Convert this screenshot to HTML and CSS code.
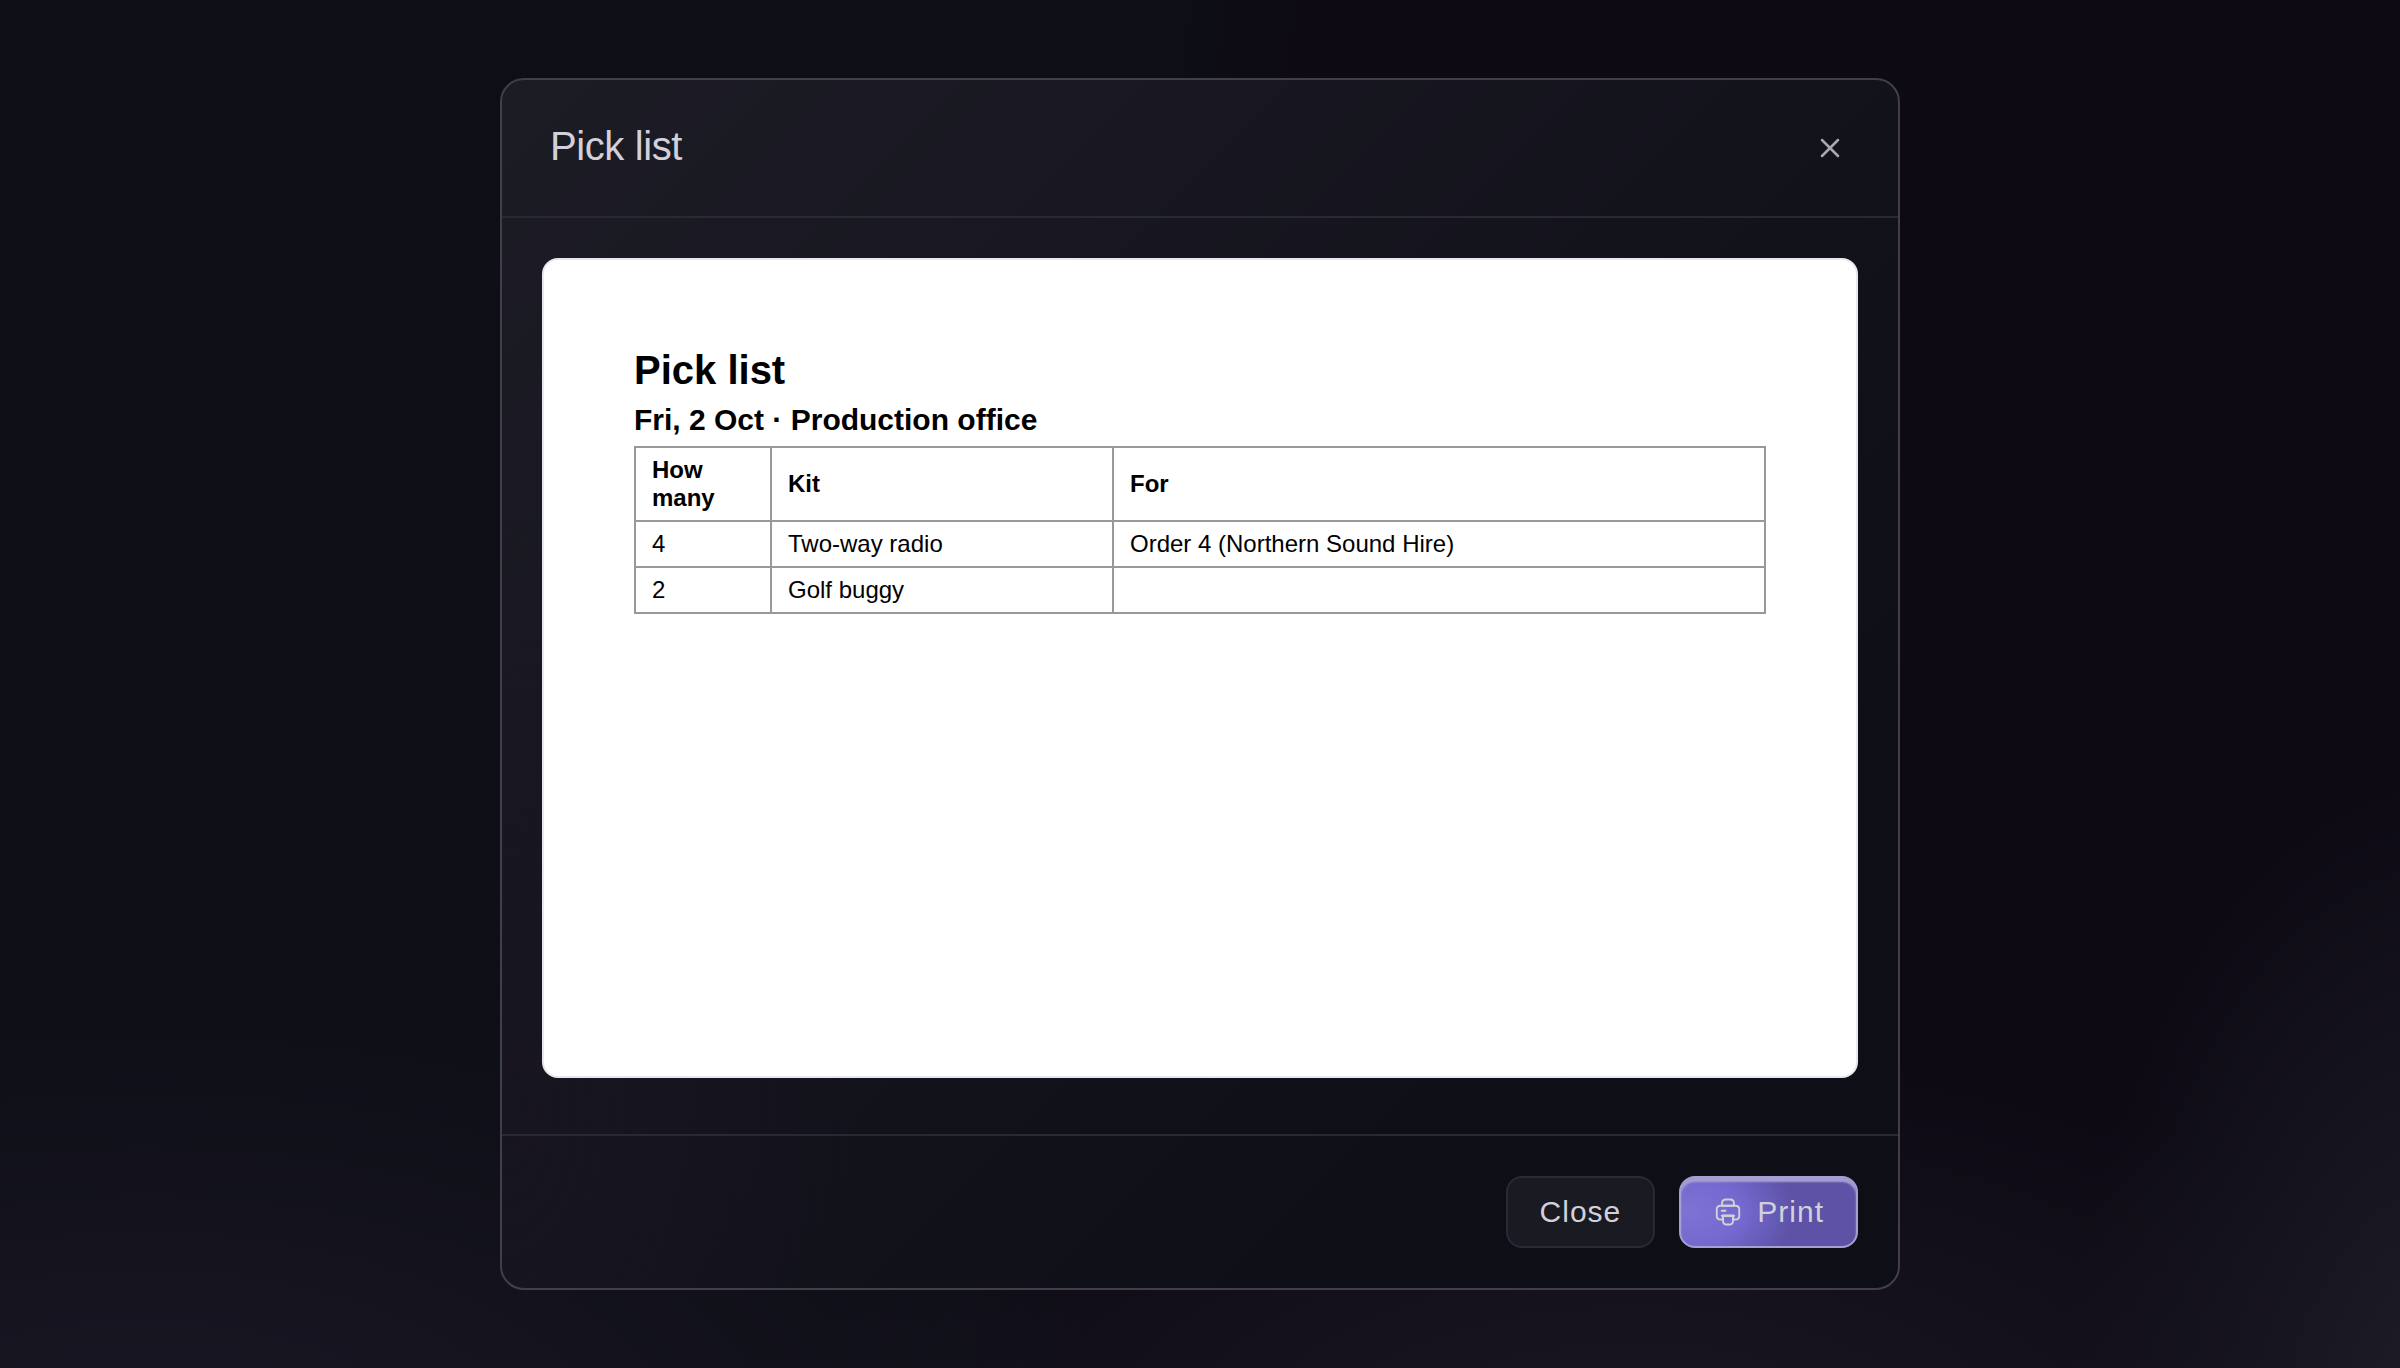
FILE: index.html
```html
<!DOCTYPE html>
<html lang="en">
<head>
  <meta charset="UTF-8" />
  <meta name="viewport" content="width=device-width, initial-scale=1.0" />
  <title>Pick list</title>
  <link rel="stylesheet" href="styles.css">
</head>
<body>
  <div class="backdrop">
    <section class="modal" role="dialog" aria-modal="true" aria-labelledby="modal-title">
      <header class="modal-header">
        <h2 class="modal-title" id="modal-title">Pick list</h2>
        <button type="button" class="icon-button" aria-label="Close dialog">
          <svg width="24" height="24" viewBox="0 0 24 24" fill="none" stroke="currentColor" stroke-width="2.5" stroke-linecap="round">
            <path d="M4 4l16 16M20 4L4 20" />
          </svg>
        </button>
      </header>

      <div class="modal-body">
        <article class="sheet">
          <h1 class="sheet-title">Pick list</h1>
          <h2 class="sheet-subtitle">Fri, 2 Oct · Production office</h2>
          <table class="sheet-table">
            <thead>
              <tr>
                <th class="col-count" scope="col">How many</th>
                <th class="col-kit" scope="col">Kit</th>
                <th scope="col">For</th>
              </tr>
            </thead>
            <tbody>
              <tr>
                <td>4</td>
                <td>Two-way radio</td>
                <td>Order 4 (Northern Sound Hire)</td>
              </tr>
              <tr>
                <td>2</td>
                <td>Golf buggy</td>
                <td></td>
              </tr>
            </tbody>
          </table>
        </article>
      </div>

      <footer class="modal-footer">
        <button type="button" class="button">Close</button>
        <button type="button" class="button button-primary">
          <svg width="30" height="30" viewBox="0 0 24 24" fill="none" stroke="currentColor" stroke-width="1.5" stroke-linecap="round" stroke-linejoin="round" aria-hidden="true">
            <path d="M7.25 7h9.5V5c0-2-.75-3-3-3h-3.5c-2.250 0-3 1-3 3v2z" />
            <path d="M16 15v4c0 2-1 3-3 3h-2c-2 0-3-1-3-3v-4h8z" />
            <path d="M21 10v5c0 2-1 3-3 3h-2v-3H8v3H6c-2 0-3-1-3-3v-5c0-2 1-3 3-3h12c2 0 3 1 3 3z" />
            <path d="M17 15H7M7 11h3" />
          </svg>
          Print
        </button>
      </footer>
    </section>
  </div>
</body>
</html>
```
FILE: styles.css
```css
* {
  box-sizing: border-box;
}

body {
  margin: 0;
  font-family: "Liberation Sans", Arial, sans-serif;
  color: #d2d1da;
  background: #0d0c15;
}

h1, h2 {
  margin: 0;
}

.backdrop {
  display: flex;
  align-items: center;
  justify-content: center;
  min-height: 100vh;
  padding: 40px;
  background:
    radial-gradient(ellipse 40% 36% at 6% 108%, #1b1825, transparent),
    radial-gradient(ellipse 36% 32% at 68% 108%, #1b1825, transparent),
    radial-gradient(ellipse 16% 50% at 102% 106%, #1f1e29, transparent),
    linear-gradient(100deg, #0d0e16, #0d0e16 45%, #0d0a14 50%);
}

.modal {
  width: 100%;
  max-width: 1400px;
  border: 2px solid #403f4a;
  border-radius: 24px;
  background:
    radial-gradient(ellipse 25% 50% at 0% 85%, #181521, transparent),
    linear-gradient(135deg, #1c1c25 0%, #191822 25%, #13131c 50%, #0e0e17 80%);
}

.modal-header {
  display: flex;
  align-items: flex-start;
  justify-content: space-between;
  padding: 40px 40px 40px 48px;
  border-bottom: 2px solid #292835;
}

.modal-title {
  font-size: 40px;
  font-weight: 400;
  line-height: 52px;
  letter-spacing: -0.01em;
}

.icon-button {
  display: flex;
  align-items: center;
  justify-content: center;
  width: 56px;
  height: 56px;
  padding: 0;
  border: none;
  border-radius: 12px;
  background: none;
  color: #a9a8b0;
  cursor: pointer;
}

.modal-body {
  padding: 40px 40px 56px;
}

.sheet {
  min-height: 60vh;
  padding: 90px;
  border: 2px solid #e8e6f0;
  border-radius: 16px;
  background: #fff;
  color: #000;
}

.sheet-title {
  font-size: 40px;
  line-height: 40px;
}

.sheet-subtitle {
  margin: 12px 0 8px;
  font-size: 30px;
  line-height: 36px;
}

.sheet-table {
  width: 100%;
  border-collapse: collapse;
  font-size: 24px;
  line-height: 28px;
}

.sheet-table th,
.sheet-table td {
  height: 46px;
  padding: 8px 16px;
  border: 2px solid #999;
  text-align: left;
}

.sheet-table .col-count {
  width: 136px;
}

.sheet-table .col-kit {
  width: 342px;
}

.modal-footer {
  display: flex;
  justify-content: flex-end;
  gap: 24px;
  padding: 40px;
  border-top: 2px solid #292835;
}

.button {
  display: flex;
  align-items: center;
  gap: 14px;
  height: 72px;
  padding: 0 32px;
  border: 2px solid #2a2936;
  border-radius: 16px;
  background: #1a1a23;
  color: #d2d1da;
  font-family: inherit;
  font-size: 30px;
  letter-spacing: 1px;
  cursor: pointer;
}

.button-primary {
  border-color: #a5a0d3;
  background: radial-gradient(ellipse 60% 100% at 5% 50%, #7d73d3, #7469cf 50%, #5d52a6);
  box-shadow: inset 0 4px 2px #a5a0d3;
}
```
